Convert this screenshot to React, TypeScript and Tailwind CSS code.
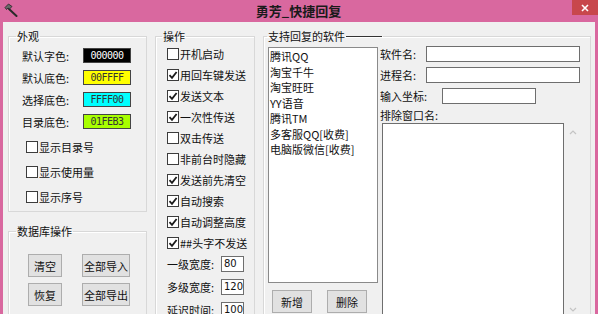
import React from "react";

const Check = ({ checked, label }: { checked?: boolean; label: string }) => (
  <div className="flex items-center h-[14px] gap-[1px] whitespace-nowrap">
    <span className="w-[12px] h-[12px] border border-[#3c3c3c] bg-white flex items-center justify-center shrink-0">
      {checked && (
        <svg width="10" height="10" viewBox="0 0 10 10">
          <path d="M1.5 5.2 L4 7.8 L8.6 2" fill="none" stroke="#1a1a1a" strokeWidth="1.8" />
        </svg>
      )}
    </span>
    <span>{label}</span>
  </div>
);

const Btn = ({ label, w }: { label: string; w: string }) => (
  <div className={`${w} h-[23px] bg-[#e1e1e1] border border-[#adadad] flex items-center justify-center`}>{label}</div>
);

const Swatch = ({ label, bg, fg, code }: { label: string; bg: string; fg: string; code: string }) => (
  <div className="flex items-center h-[15px]">
    <span className="w-[61px]">{label}</span>
    <span
      className={`w-[48px] h-[15px] border border-[#444] ${bg} ${fg} flex items-center justify-center text-[10px] font-['DejaVu_Sans_Mono',monospace] tracking-[-0.5px]`}
    >
      {code}
    </span>
  </div>
);

const Field = ({ label, w, value }: { label: string; w: string; value: string }) => (
  <div className="flex items-center h-[16px]">
    <span className="w-[54px]">{label}</span>
    <span className={`${w} h-[16px] bg-white border border-[#6e6e6e] text-[10px] leading-[14px] pl-[2px] font-['DejaVu_Sans',sans-serif]`}>
      {value}
    </span>
  </div>
);

export default function App() {
  const items = ["腾讯QQ", "淘宝千牛", "淘宝旺旺", "YY语音", "腾讯TM", "多客服QQ[收费]", "电脑版微信[收费]"];
  return (
    <div className="w-[598px] h-[314px] overflow-hidden bg-[#d9689f] flex flex-col text-[11px] leading-[12px] text-[#111] font-['Noto_Sans_CJK_SC',sans-serif]">
      {/* title bar */}
      <div className="h-[22px] flex items-start shrink-0">
        <div className="w-[22px] h-[20px] flex items-center justify-center">
          <svg width="14" height="14" viewBox="0 0 14 14">
            <path d="M5 6 L12.5 13" stroke="#2a2a2a" strokeWidth="2" strokeLinecap="round" />
            <path d="M1 4.5 L4.5 1 L8 3.5 L5.5 6 L4 5 L2.5 6.5 Z" fill="#6a6a6a" stroke="#222" strokeWidth="0.8" />
          </svg>
        </div>
        <div className="flex-1 text-center text-[13px] leading-[22px] font-bold text-[#1a1a1a] pl-[3px]">勇芳_快捷回复</div>
        <div className="w-[26px] h-[15px] bg-[#c8474c] flex items-center justify-center">
          <svg width="8" height="8" viewBox="0 0 8 8">
            <path d="M1 1 L7 7 M7 1 L1 7" stroke="#fff" strokeWidth="1.6" />
          </svg>
        </div>
      </div>

      {/* client */}
      <div className="flex-1 mx-[3px] bg-[#f0f0f0] flex pl-[5px] pt-[8px] gap-[8px]">
        {/* left column */}
        <div className="w-[139px] flex flex-col shrink-0">
          <fieldset className="h-[182px] border border-[#d8d8d8] shadow-[inset_1px_1px_0_#fff]">
            <legend className="ml-[7px] px-[1px]">外观</legend>
            <div className="pl-[13px] pt-[6px] flex flex-col gap-[7px]">
              <Swatch label="默认字色:" bg="bg-black" fg="text-white" code="000000" />
              <Swatch label="默认底色:" bg="bg-[#ffff00]" fg="text-[#333]" code="00FFFF" />
              <Swatch label="选择底色:" bg="bg-[#00ffff]" fg="text-[#333]" code="FFFF00" />
              <Swatch label="目录底色:" bg="bg-[#a8ff00]" fg="text-[#333]" code="01FEB3" />
            </div>
            <div className="pl-[17px] mt-[11px] flex flex-col gap-[11px]">
              <Check label="显示目录号" />
              <Check label="显示使用量" />
              <Check label="显示序号" />
            </div>
          </fieldset>
          <fieldset className="mt-[13px] h-[120px] border border-[#d8d8d8] shadow-[inset_1px_1px_0_#fff]">
            <legend className="ml-[7px] px-[1px]">数据库操作</legend>
            <div className="pl-[19px] pt-[17px] grid grid-cols-[34px_48px] gap-x-[20px] gap-y-[6px]">
              <Btn label="清空" w="w-[34px]" />
              <Btn label="全部导入" w="w-[48px]" />
              <Btn label="恢复" w="w-[34px]" />
              <Btn label="全部导出" w="w-[48px]" />
            </div>
          </fieldset>
        </div>

        {/* middle column */}
        <fieldset className="w-[100px] h-[300px] shrink-0 border border-[#d8d8d8] shadow-[inset_1px_1px_0_#fff]">
          <legend className="ml-[6px] px-[1px]">操作</legend>
          <div className="pl-[11px] pt-[5px] flex flex-col gap-[7px]">
            <Check label="开机启动" />
            <Check checked label="用回车键发送" />
            <Check checked label="发送文本" />
            <Check checked label="一次性传送" />
            <Check label="双击传送" />
            <Check label="非前台时隐藏" />
            <Check checked label="发送前先清空" />
            <Check checked label="自动搜索" />
            <Check checked label="自动调整高度" />
            <Check checked label="##头字不发送" />
          </div>
          <div className="pl-[11px] mt-[6px] flex flex-col gap-[7px]">
            <Field label="一级宽度:" w="w-[23px]" value="80" />
            <Field label="多级宽度:" w="w-[23px]" value="120" />
            <Field label="延迟时间:" w="w-[23px]" value="100" />
          </div>
        </fieldset>

        {/* right group */}
        <fieldset className="w-[328px] h-[300px] shrink-0 border border-[#d8d8d8] shadow-[inset_1px_1px_0_#fff]">
          <legend className="ml-[3px] px-[1px] flex items-center">
            <span>支持回复的软件</span>
            <span className="w-[36px] h-[1px] bg-[#333] ml-[1px]" />
          </legend>
          <div className="flex">
            <div className="pl-[4px] pt-[5px] flex flex-col">
              <div className="w-[110px] h-[236px] bg-white border border-[#8a8a8a] pl-[1px] pt-[1px] flex flex-col">
                {items.map((t) => (
                  <div key={t} className="h-[15.5px] leading-[15.5px] whitespace-nowrap">
                    {t}
                  </div>
                ))}
              </div>
              <div className="flex gap-[15px] pl-[4px] mt-[7px]">
                <Btn label="新增" w="w-[40px]" />
                <Btn label="删除" w="w-[40px]" />
              </div>
            </div>
            <div className="pl-[2px] pt-[4px] flex flex-col">
              <div className="flex items-center h-[16px]">
                <span className="w-[46px]">软件名:</span>
                <span className="w-[154px] h-[16px] bg-white border border-[#6e6e6e]" />
              </div>
              <div className="flex items-center h-[16px] mt-[5px]">
                <span className="w-[46px]">进程名:</span>
                <span className="w-[154px] h-[16px] bg-white border border-[#6e6e6e]" />
              </div>
              <div className="flex items-center h-[16px] mt-[5px]">
                <span className="w-[62px]">输入坐标:</span>
                <span className="w-[94px] h-[16px] bg-white border border-[#6e6e6e]" />
              </div>
              <div className="mt-[5px] h-[12px]">排除窗口名:</div>
              <div className="flex mt-[2px] pl-[2px]">
                <div className="w-[182px] h-[200px] bg-white border border-[#6e6e6e]" />
                <div className="w-[18px] h-[190px] flex flex-col justify-between items-center pt-[6px]">
                  <svg width="8" height="6" viewBox="0 0 8 6">
                    <path d="M1 5 L4 2 L7 5" fill="none" stroke="#c4c4c4" strokeWidth="1.2" />
                  </svg>
                  <svg width="8" height="6" viewBox="0 0 8 6">
                    <path d="M1 1 L4 4 L7 1" fill="none" stroke="#c4c4c4" strokeWidth="1.2" />
                  </svg>
                </div>
              </div>
            </div>
          </div>
        </fieldset>
      </div>
    </div>
  );
}
